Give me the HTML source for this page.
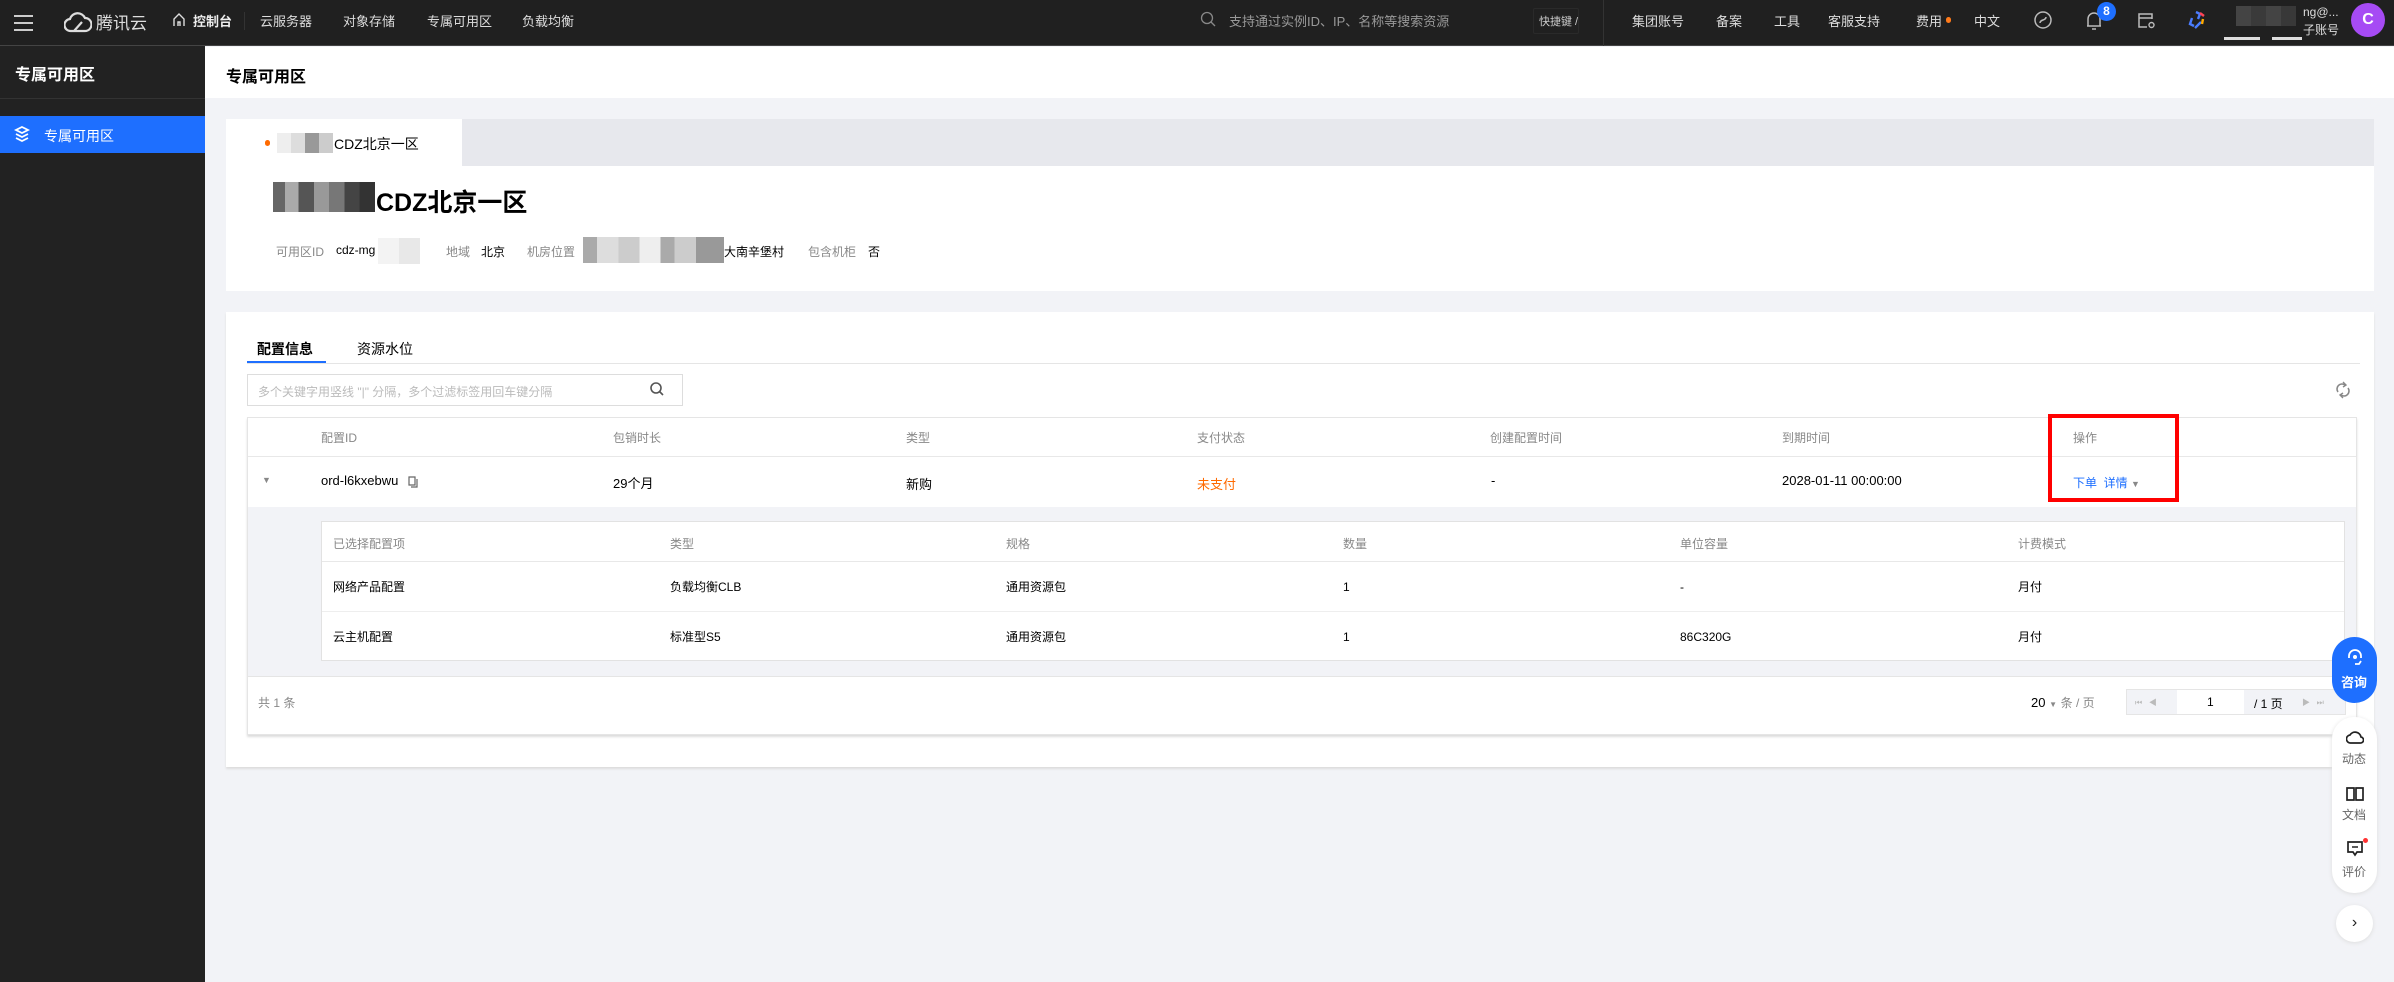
<!DOCTYPE html>
<html><head><meta charset="utf-8"><style>
*{box-sizing:border-box;margin:0;padding:0}
body{width:2394px;height:982px;overflow:hidden;background:#f2f3f7;font-family:"Liberation Sans","Noto Sans CJK SC",sans-serif;font-size:13px;color:#000;position:relative}
.abs{position:absolute}
.top{left:0;top:0;width:2394px;height:46px;background:#202020;border-bottom:1px solid #444}
.top .t{position:absolute;top:11px;color:#ddd;font-size:13px;white-space:nowrap}
.side{left:0;top:46px;width:205px;height:936px;background:#222}
.blur{position:absolute;display:flex;flex-wrap:wrap}
.hd{color:#888;font-size:12px;position:absolute}
.cell{position:absolute;font-size:13px;color:#000;white-space:nowrap}
</style></head><body>
<div class="abs top">
  <div class="abs" style="left:14px;top:15px;width:19px">
    <div style="height:2px;background:#ccc;margin-bottom:5px"></div><div style="height:2px;background:#ccc;margin-bottom:5px"></div><div style="height:2px;background:#ccc"></div></div>
  <svg class="abs" style="left:64px;top:11px" width="28" height="22" viewBox="0 0 28 22"><path d="M7 20 a6 6 0 0 1 -1-12 a8 8 0 0 1 15-1 a6.5 6.5 0 0 1 0 13 z M10 20 l8-9" fill="none" stroke="#ddd" stroke-width="2.2"/></svg>
  <div class="t" style="left:96px;top:9px;font-size:17px;color:#ddd">腾讯云</div>
  <svg class="abs" style="left:173px;top:13px" width="12" height="14" viewBox="0 0 12 14"><path d="M1 13V6L6 1l5 5v7M5 13V9h2v4" fill="none" stroke="#ddd" stroke-width="1.4"/></svg>
  <div class="t" style="left:193px;color:#eee;font-weight:bold">控制台</div>
  <div class="abs" style="left:244px;top:12px;width:1px;height:18px;background:#333"></div>
  <div class="t" style="left:260px">云服务器</div>
  <div class="t" style="left:343px">对象存储</div>
  <div class="t" style="left:427px">专属可用区</div>
  <div class="t" style="left:522px">负载均衡</div>
  <svg class="abs" style="left:1200px;top:11px" width="16" height="18" viewBox="0 0 16 18"><circle cx="7" cy="7" r="5.5" fill="none" stroke="#888" stroke-width="1.3"/><path d="M11 11l4 4" stroke="#888" stroke-width="1.3"/></svg>
  <div class="t" style="left:1229px;color:#999">支持通过实例ID、IP、名称等搜索资源</div>
  <div class="abs" style="left:1533px;top:8px;width:46px;height:26px;border:1px solid #2a2a2a;border-radius:2px"></div>
  <div class="t" style="left:1539px;font-size:11px;color:#ccc;top:13px">快捷键 /</div>
  <div class="abs" style="left:1603px;top:0;width:1px;height:46px;background:#333"></div>
  <div class="t" style="left:1632px">集团账号</div>
  <div class="t" style="left:1716px">备案</div>
  <div class="t" style="left:1774px">工具</div>
  <div class="t" style="left:1828px">客服支持</div>
  <div class="t" style="left:1916px">费用</div>
  <div class="abs" style="left:1946px;top:17px;width:5px;height:6px;border-radius:3px;background:#ff7a1a"></div>
  <div class="t" style="left:1974px">中文</div>
  <svg class="abs" style="left:2033px;top:10px" width="20" height="20" viewBox="0 0 20 20"><circle cx="10" cy="10" r="8" fill="none" stroke="#bbb" stroke-width="1.5"/><path d="M7 13c0-4 6-2 6-6" fill="none" stroke="#bbb" stroke-width="1.5"/></svg>
  <svg class="abs" style="left:2085px;top:10px" width="18" height="22" viewBox="0 0 18 22"><path d="M3 16V9a6 6 0 0 1 12 0v7H2 16M7 19h4" fill="none" stroke="#bbb" stroke-width="1.5"/></svg>
  <div class="abs" style="left:2097px;top:2px;width:19px;height:19px;border-radius:10px;background:#1e6fff;color:#fff;font-size:12px;font-weight:bold;text-align:center;line-height:19px">8</div>
  <svg class="abs" style="left:2137px;top:11px" width="20" height="20" viewBox="0 0 20 20"><path d="M15 8V3H2v13h8M2 7h13" fill="none" stroke="#bbb" stroke-width="1.5"/><circle cx="14.5" cy="14" r="2.5" fill="none" stroke="#bbb" stroke-width="1.4"/></svg>
  <svg class="abs" style="left:2187px;top:9px" width="20" height="22" viewBox="0 0 20 22"><path d="M9 3l4 2-2 5M5 9l-2 6 4 2M14 13l-6 6" stroke="#4a7dff" stroke-width="2.4" fill="none"/><path d="M13 4l4 3" stroke="#f45" stroke-width="2.4"/><path d="M16 10l-1 5" stroke="#fa0" stroke-width="2.4"/></svg>
  <div class="blur" style="left:2236px;top:6px;width:60px;height:20px;background:linear-gradient(90deg,#444 0 25%,#3a3a3a 25% 50%,#444 50% 75%,#383838 75%)"></div>
  <div class="abs" style="left:2224px;top:37px;width:36px;height:3px;background:#ddd"></div>
  <div class="abs" style="left:2272px;top:37px;width:30px;height:3px;background:#ddd"></div>
  <div class="t" style="left:2303px;top:5px;font-size:12px">ng@...</div>
  <div class="t" style="left:2303px;top:21px;font-size:12px">子账号</div>
  <div class="abs" style="left:2351px;top:3px;width:34px;height:34px;border-radius:17px;background:#a64bf4;color:#fff;font-size:16px;font-weight:bold;text-align:center;line-height:34px">C</div>
</div>

<div class="abs side">
  <div class="abs" style="left:15px;top:15px;color:#fff;font-size:16px;font-weight:bold">专属可用区</div>
  <div class="abs" style="left:0;top:52px;width:205px;height:1px;background:#333"></div>
  <div class="abs" style="left:0;top:70px;width:205px;height:37px;background:#1e6fff">
    <svg class="abs" style="left:14px;top:10px" width="16" height="17" viewBox="0 0 16 17"><path d="M8 1l6 3-6 3-6-3z M2 8l6 3 6-3 M2 12l6 3 6-3" fill="none" stroke="#fff" stroke-width="1.8"/></svg>
    <div class="abs" style="left:44px;top:10px;color:#fff;font-size:14px">专属可用区</div>
  </div>
</div>

<div class="abs" style="left:205px;top:47px;width:2189px;height:51px;background:#fff"></div>
<div class="abs" style="left:226px;top:63px;font-size:16px;font-weight:bold;color:#000">专属可用区</div>

<div class="abs" style="left:226px;top:119px;width:2148px;height:172px;background:#fff"></div>
<div class="abs" style="left:462px;top:119px;width:1912px;height:47px;background:#e7e8ed"></div>
<div class="abs" style="left:265px;top:140px;width:5px;height:6px;border-radius:3px;background:#ff6a00"></div>
<div class="blur" style="left:277px;top:133px;width:56px;height:20px;background:linear-gradient(90deg,#eee 0 25%,#ddd 25% 50%,#999 50% 75%,#ccc 75%)"></div>
<div class="abs" style="left:334px;top:134px;font-size:14px;color:#000">CDZ北京一区</div>
<div class="blur" style="left:273px;top:182px;width:102px;height:30px;background:linear-gradient(90deg,#666 0 12%,#aaa 12% 25%,#555 25% 40%,#999 40% 55%,#777 55% 70%,#444 70% 85%,#333 85%)"></div>
<div class="abs" style="left:376px;top:183px;font-size:25px;font-weight:bold;color:#000">CDZ北京一区</div>
<div class="abs" style="left:276px;top:243px;font-size:12px;color:#888">可用区ID</div>
<div class="abs" style="left:336px;top:243px;font-size:12px;color:#000">cdz-mg</div>
<div class="blur" style="left:378px;top:238px;width:42px;height:26px;background:linear-gradient(90deg,#f3f3f3 0 50%,#e8e8e8 50%)"></div>
<div class="abs" style="left:446px;top:243px;font-size:12px;color:#888">地域</div>
<div class="abs" style="left:481px;top:243px;font-size:12px;color:#000">北京</div>
<div class="abs" style="left:527px;top:243px;font-size:12px;color:#888">机房位置</div>
<div class="blur" style="left:583px;top:237px;width:141px;height:26px;background:linear-gradient(90deg,#aaa 0 10%,#ddd 10% 25%,#ccc 25% 40%,#eee 40% 55%,#aaa 55% 65%,#ccc 65% 80%,#999 80%)"></div>
<div class="abs" style="left:724px;top:243px;font-size:12px;color:#000">大南辛堡村</div>
<div class="abs" style="left:808px;top:243px;font-size:12px;color:#888">包含机柜</div>
<div class="abs" style="left:868px;top:243px;font-size:12px;color:#000">否</div>

<div class="abs" style="left:226px;top:312px;width:2148px;height:455px;background:#fff;box-shadow:0 2px 2px #ddd"></div>
<div class="abs" style="left:257px;top:339px;font-size:14px;font-weight:bold">配置信息</div>
<div class="abs" style="left:357px;top:339px;font-size:14px">资源水位</div>
<div class="abs" style="left:247px;top:363px;width:2113px;height:1px;background:#e5e5e5"></div>
<div class="abs" style="left:247px;top:361px;width:79px;height:2px;background:#1e6fff"></div>
<div class="abs" style="left:247px;top:374px;width:436px;height:32px;border:1px solid #ddd"></div>
<div class="abs" style="left:258px;top:383px;font-size:12px;color:#bbb">多个关键字用竖线 "|" 分隔，多个过滤标签用回车键分隔</div>
<svg class="abs" style="left:649px;top:381px" width="16" height="17" viewBox="0 0 16 17"><circle cx="7" cy="7" r="5" fill="none" stroke="#555" stroke-width="1.6"/><path d="M10.5 10.5l3.5 3.5" stroke="#555" stroke-width="1.6"/></svg>
<svg class="abs" style="left:2335px;top:381px" width="16" height="18" viewBox="0 0 16 18"><path d="M3 11a5 5 0 0 1 7-7M13 7a5 5 0 0 1-7 7" fill="none" stroke="#888" stroke-width="1.6"/><path d="M8 1l3 3-3 2M8 17l-3-3 3-2" fill="none" stroke="#888" stroke-width="1.4"/></svg>

<div class="abs" style="left:247px;top:417px;width:2110px;height:318px;border:1px solid #e5e5e5;background:#fff;box-shadow:0 2px 2px #ddd"></div>
<div class="abs" style="left:248px;top:456px;width:2108px;height:1px;background:#e8e8e8"></div>
<div class="hd" style="left:321px;top:429px">配置ID</div>
<div class="hd" style="left:613px;top:429px">包销时长</div>
<div class="hd" style="left:906px;top:429px">类型</div>
<div class="hd" style="left:1197px;top:429px">支付状态</div>
<div class="hd" style="left:1490px;top:429px">创建配置时间</div>
<div class="hd" style="left:1782px;top:429px">到期时间</div>
<div class="hd" style="left:2073px;top:429px">操作</div>
<div class="abs" style="left:262px;top:475px;font-size:9px;color:#888">▼</div>
<div class="cell" style="left:321px;top:473px">ord-l6kxebwu</div>
<svg class="abs" style="left:408px;top:476px" width="10" height="12" viewBox="0 0 10 12"><path d="M1 1h6v8H1zM3 11h6V3" fill="none" stroke="#666" stroke-width="1.2"/></svg>
<div class="cell" style="left:613px;top:473px">29个月</div>
<div class="cell" style="left:906px;top:474px">新购</div>
<div class="cell" style="left:1197px;top:474px;color:#ff6a00">未支付</div>
<div class="cell" style="left:1491px;top:473px">-</div>
<div class="cell" style="left:1782px;top:473px">2028-01-11 00:00:00</div>
<div class="cell" style="left:2073px;top:474px;color:#1e6fff;font-size:12px">下单&nbsp;&nbsp;详情 <span style="color:#888;font-size:9px">▼</span></div>
<div class="abs" style="left:2048px;top:414px;width:131px;height:88px;border:4px solid #ff0000"></div>

<div class="abs" style="left:248px;top:507px;width:2108px;height:170px;background:#f2f3f7;border-bottom:1px solid #e5e5e5"></div>
<div class="abs" style="left:321px;top:521px;width:2024px;height:140px;background:#fff;border:1px solid #e2e2e2"></div>
<div class="abs" style="left:322px;top:561px;width:2022px;height:1px;background:#e8e8e8"></div>
<div class="abs" style="left:322px;top:611px;width:2022px;height:1px;background:#eee"></div>
<div class="hd" style="left:333px;top:535px">已选择配置项</div>
<div class="hd" style="left:670px;top:535px">类型</div>
<div class="hd" style="left:1006px;top:535px">规格</div>
<div class="hd" style="left:1343px;top:535px">数量</div>
<div class="hd" style="left:1680px;top:535px">单位容量</div>
<div class="hd" style="left:2018px;top:535px">计费模式</div>
<div class="cell" style="left:333px;top:578px;font-size:12px">网络产品配置</div>
<div class="cell" style="left:670px;top:578px;font-size:12px">负载均衡CLB</div>
<div class="cell" style="left:1006px;top:578px;font-size:12px">通用资源包</div>
<div class="cell" style="left:1343px;top:580px;font-size:12px">1</div>
<div class="cell" style="left:1680px;top:580px;font-size:12px">-</div>
<div class="cell" style="left:2018px;top:578px;font-size:12px">月付</div>
<div class="cell" style="left:333px;top:628px;font-size:12px">云主机配置</div>
<div class="cell" style="left:670px;top:628px;font-size:12px">标准型S5</div>
<div class="cell" style="left:1006px;top:628px;font-size:12px">通用资源包</div>
<div class="cell" style="left:1343px;top:630px;font-size:12px">1</div>
<div class="cell" style="left:1680px;top:630px;font-size:12px">86C320G</div>
<div class="cell" style="left:2018px;top:628px;font-size:12px">月付</div>

<div class="abs" style="left:258px;top:694px;font-size:12px;color:#888">共 1 条</div>
<div class="abs" style="left:2031px;top:694px;font-size:13px">20 <span style="font-size:8px;color:#888">▼</span> <span style="color:#888;font-size:12px">条 / 页</span></div>
<div class="abs" style="left:2126px;top:689px;width:220px;height:26px;background:#f2f3f7;border:1px solid #e5e5e5"></div>
<div class="abs" style="left:2177px;top:690px;width:67px;height:24px;background:#fff"></div>
<div class="abs" style="left:2207px;top:695px;font-size:12px">1</div>
<div class="abs" style="left:2254px;top:695px;font-size:12px">/ 1 页</div>
<div class="abs" style="left:2135px;top:697px;font-size:8px;color:#bbb">⏮&nbsp;&nbsp;&nbsp;◀</div>
<div class="abs" style="left:2302px;top:697px;font-size:8px;color:#bbb">▶&nbsp;&nbsp;&nbsp;⏭</div>

<div class="abs" style="left:2332px;top:637px;width:45px;height:66px;border-radius:23px;background:#1e6fff"></div>
<svg class="abs" style="left:2346px;top:648px" width="18" height="18" viewBox="0 0 18 18"><path d="M3 10V8a6 6 0 0 1 12 0v2M9 16h4l2-3" fill="none" stroke="#fff" stroke-width="1.8"/><circle cx="9" cy="9" r="2" fill="#fff"/></svg>
<div class="abs" style="left:2341px;top:672px;color:#fff;font-size:13px;font-weight:bold">咨询</div>
<div class="abs" style="left:2332px;top:717px;width:45px;height:176px;border-radius:22px;background:#fff;box-shadow:0 1px 4px #ddd"></div>
<svg class="abs" style="left:2346px;top:728px" width="18" height="18" viewBox="0 0 18 18"><path d="M5 15a4 4 0 0 1-1-8 6 6 0 0 1 11 2 3 3 0 0 1-1 6z" fill="none" stroke="#222" stroke-width="1.7"/></svg>
<div class="abs" style="left:2342px;top:750px;font-size:12px;color:#666">动态</div>
<svg class="abs" style="left:2346px;top:786px" width="18" height="16" viewBox="0 0 18 16"><path d="M1 2h7v12H1zM10 2h7v12h-7z" fill="none" stroke="#222" stroke-width="1.7"/></svg>
<div class="abs" style="left:2342px;top:806px;font-size:12px;color:#666">文档</div>
<svg class="abs" style="left:2346px;top:840px" width="18" height="18" viewBox="0 0 18 18"><path d="M2 2h14v10H11l-2 3-2-3H2z" fill="none" stroke="#222" stroke-width="1.7"/><path d="M6 7h6" stroke="#222" stroke-width="1.5"/></svg>
<div class="abs" style="left:2363px;top:838px;width:5px;height:5px;border-radius:3px;background:#f33"></div>
<div class="abs" style="left:2342px;top:863px;font-size:12px;color:#666">评价</div>
<div class="abs" style="left:2336px;top:905px;width:37px;height:37px;border-radius:19px;background:#fff;box-shadow:0 1px 4px #ddd;text-align:center;line-height:35px;font-size:16px;color:#222">›</div>
</body></html>
